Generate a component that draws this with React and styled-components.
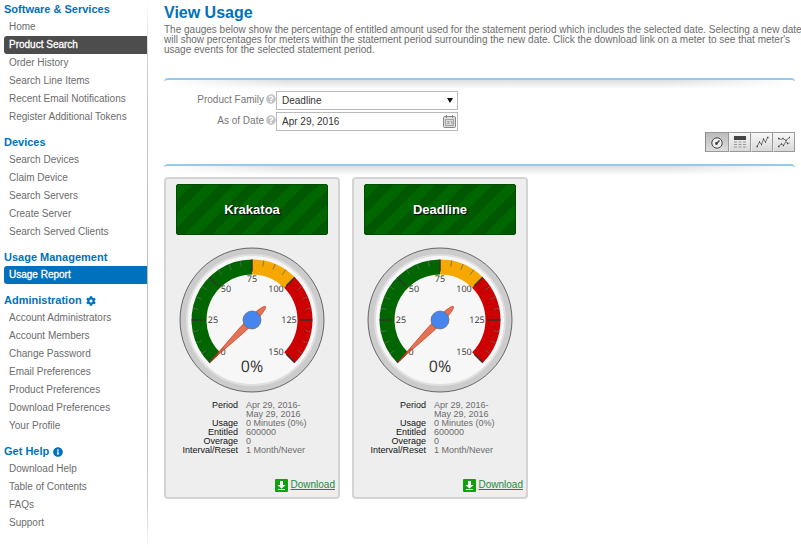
import React from "react";
import styled, { createGlobalStyle } from "styled-components";
import { FaCog, FaInfoCircle, FaQuestionCircle } from "react-icons/fa";

const GlobalStyle = createGlobalStyle`
  body {
    margin: 0;
    background: #fff;
    color: #6c6c6c;
    font-family: "Liberation Sans", Arial, sans-serif;
    font-size: 10px;
  }
`;

const Page = styled.div`
  display: flex;
  align-items: flex-start;
  overflow-x: clip;
`;

const Sidebar = styled.nav`
  flex: 0 0 144px;
  box-sizing: border-box;
  padding: 1px 0 8px;
  margin-left: 4px;
  border-right: 1px solid;
  border-image: linear-gradient(#fff, #ccc 12%, #bbb 50%, #ccc 92%, #fff) 1;
`;

const Section = styled.section`
  margin-bottom: 8px;
`;

const SectionTitle = styled.h2`
  display: flex;
  align-items: center;
  gap: 4px;
  height: 17px;
  margin: 0;
  color: #0071bc;
  font-size: 11px;
  line-height: 17px;
  white-space: nowrap;
`;

const MenuList = styled.ul`
  margin: 0;
  padding: 0;
  list-style: none;
`;

const backgrounds = { hover: "#4d4d4d", current: "#0071bc" };

const MenuLink = styled.a`
  display: block;
  padding-left: 5px;
  border-radius: 3px 0 0 3px;
  background: ${({ $state }) => backgrounds[$state] || "none"};
  color: ${({ $state }) => ($state ? "#fff" : "#6c6c6c")};
  -webkit-text-stroke: ${({ $state }) => ($state ? "0.3px #fff" : "0")};
  line-height: 18px;
  text-decoration: none;
`;

const Main = styled.main`
  flex: 1;
  min-width: 0;
  padding: 3px 6px 24px 16px;
`;

const Title = styled.h1`
  margin: 0 0 3px;
  color: #0071bc;
  font-size: 16px;
  line-height: 19px;
`;

const Description = styled.p`
  margin: 0 -8px 23px 0;
  line-height: 10px;
`;

const Divider = styled.div`
  height: 11px;
  border-top: 2px solid #96caec;
  border-radius: 4px 4px 0 0;
  background:
    linear-gradient(90deg, #fff, transparent 20% 80%, #fff),
    linear-gradient(#ddd, #fff 9px);
`;

const Filters = styled.form`
  display: grid;
  grid-template-columns: 112px 182px;
  row-gap: 2px;
`;

const Label = styled.label`
  display: flex;
  align-items: center;
  justify-content: flex-end;
  gap: 2px;
  height: 16px;
  color: #777;

  svg {
    color: #c4c4c4;
  }
`;

const Field = styled.div`
  position: relative;
`;

const control = `
  box-sizing: border-box;
  display: block;
  width: 100%;
  height: 19px;
  margin: 0;
  padding: 0 5px;
  border: 1px solid #bbb;
  border-radius: 0;
  background: #fff;
  color: #333;
  font: 10px "Liberation Sans", Arial, sans-serif;
`;

const Select = styled.select`
  ${control}
  appearance: none;
`;

const Input = styled.input`
  ${control}
`;

const Arrow = styled.span`
  position: absolute;
  top: 7px;
  right: 5px;
  border: 3px solid transparent;
  border-top: 5px solid #111;
  border-bottom: 0;
  pointer-events: none;
`;

const CalendarButton = styled.button`
  position: absolute;
  top: 3px;
  right: 2px;
  width: 13px;
  height: 13px;
  padding: 0;
  border: 0;
  background: none;

  svg {
    display: block;
  }
`;

const Toolbar = styled.div`
  display: flex;
  justify-content: flex-end;
  margin: 1px 0 12px;
`;

const ToolButton = styled.button`
  display: flex;
  align-items: center;
  justify-content: center;
  box-sizing: border-box;
  width: ${({ $active }) => ($active ? "24px" : "22px")};
  height: 20px;
  padding: 0;
  border: 1px solid #999;
  border-left-color: ${({ $active }) => ($active ? "#888" : "#eee")};
  background: ${({ $active }) =>
    $active
      ? "linear-gradient(#bbb, #ddd)"
      : "linear-gradient(#f8f8f8, #d8d8d8)"};
`;

const Cards = styled.div`
  display: flex;
  flex-wrap: wrap;
  gap: 12px;
`;

const Card = styled.article`
  box-sizing: border-box;
  width: 176px;
  padding: 5px 3px;
  border: 2px solid #d4d4d4;
  border-radius: 4px;
  background: #eee;
`;

const CardTitle = styled.h3`
  box-sizing: border-box;
  margin: 0 7px 12px;
  border: 1px solid #004d00;
  border-radius: 2px;
  background: repeating-linear-gradient(
    135deg,
    #006600 0 10px,
    #005800 10px 20px
  );
  color: #fff;
  font-size: 13px;
  line-height: 49px;
  text-align: center;
  text-shadow: 1px 1px 1px #000;
`;

const GaugeSvg = styled.svg`
  display: block;
  width: 146px;
  height: 146px;
  margin: 0 auto 8px;
  font-family: "Open Sans", sans-serif;
`;

const Details = styled.dl`
  display: grid;
  grid-template-columns: 69px 1fr;
  column-gap: 8px;
  margin: 0 0 23px;
  font-size: 9px;
  line-height: 9px;

  dt {
    color: #111;
    text-align: right;
  }

  dd {
    margin: 0;
    white-space: pre-line;
  }
`;

const Download = styled.a`
  display: flex;
  justify-content: flex-end;
  align-items: center;
  gap: 3px;
  color: #1d8a3c;
  line-height: 14px;
`;

const menu = [
  {
    title: "Software & Services",
    items: [
      "Home",
      "Product Search",
      "Order History",
      "Search Line Items",
      "Recent Email Notifications",
      "Register Additional Tokens",
    ],
  },
  {
    title: "Devices",
    items: [
      "Search Devices",
      "Claim Device",
      "Search Servers",
      "Create Server",
      "Search Served Clients",
    ],
  },
  { title: "Usage Management", items: ["Usage Report"] },
  {
    title: "Administration",
    icon: <FaCog size={10} />,
    items: [
      "Account Administrators",
      "Account Members",
      "Change Password",
      "Email Preferences",
      "Product Preferences",
      "Download Preferences",
      "Your Profile",
    ],
  },
  {
    title: "Get Help",
    icon: <FaInfoCircle size={10} />,
    items: ["Download Help", "Table of Contents", "FAQs", "Support"],
  },
];

const states = { "Product Search": "hover", "Usage Report": "current" };

const meters = ["Krakatoa", "Deadline"];

const MAX = 150;

// The dial runs from -135 to 135 degrees, with 0 degrees straight up
const toAngle = (value) => (value / MAX) * 270 - 135;

const point = (value, radius) => {
  const rad = (toAngle(value) * Math.PI) / 180;
  return [radius * Math.sin(rad), -radius * Math.cos(rad)];
};

const bandPath = (from, to) =>
  `M${point(from, 60.5)} A60.5 60.5 0 0 1 ${point(to, 60.5)} ` +
  `L${point(to, 45.5)} A45.5 45.5 0 0 0 ${point(from, 45.5)} Z`;

const bands = [
  { from: 0, to: 75, color: "#006600" },
  { from: 75, to: 100, color: "#f7a800" },
  { from: 100, to: 150, color: "#cc0000" },
];

const ticks = Array.from({ length: 25 }, (_, i) => (i * MAX) / 24);

const labels = [
  { value: 0, x: -29, y: 35 },
  { value: 25, x: -39, y: 3 },
  { value: 50, x: -26, y: -28 },
  { value: 75, x: 0, y: -38 },
  { value: 100, x: 24, y: -28 },
  { value: 125, x: 37, y: 3 },
  { value: 150, x: 24, y: 35 },
];

const Gauge = ({ value }) => {
  return (
    <GaugeSvg viewBox="-73 -73 146 146" role="img" aria-label={`${value}%`}>
      <circle r="72" fill="#ccc" stroke="#333" strokeWidth="0.7" />
      <circle r="65" fill="#f7f7f7" stroke="#e0e0e0" strokeWidth="2" />
      {bands.map((band) => (
        <path
          key={band.from}
          d={bandPath(band.from, band.to)}
          fill={band.color}
        />
      ))}
      {ticks.map((tick, i) => {
        const major = i % 4 === 0;
        const [x1, y1] = point(tick, 60.5);
        const [x2, y2] = point(tick, major ? 48.5 : 54.5);
        return (
          <line
            key={tick}
            x1={x1}
            y1={y1}
            x2={x2}
            y2={y2}
            stroke={major ? "#333" : "#666"}
            strokeWidth={major ? 1.5 : 0.8}
          />
        );
      })}
      <g
        fill="#333"
        fontSize="9"
        textAnchor="middle"
        textRendering="geometricPrecision"
      >
        {labels.map((label) => (
          <text key={label.value} x={label.x} y={label.y}>
            {label.value}
          </text>
        ))}
        <text y="52" fontSize="16">
          {value}%
        </text>
      </g>
      <path
        d="M0 -60 C1.6 -32 3.6 -16 3.4 0 C3.2 10 2 19 0 19 C-2 19 -3.2 10 -3.4 0 C-3.6 -16 -1.6 -32 0 -60Z"
        transform={`rotate(${toAngle(value)})`}
        fill="#dc3912"
        fillOpacity="0.7"
        stroke="#c63310"
        strokeWidth="0.6"
      />
      <circle r="9" fill="#4684ee" stroke="#666" strokeWidth="0.7" />
    </GaugeSvg>
  );
};

const MeterCard = ({ name }) => {
  return (
    <Card>
      <CardTitle>{name}</CardTitle>
      <Gauge value={0} />
      <Details>
        <dt>Period</dt>
        <dd>{"Apr 29, 2016-\nMay 29, 2016"}</dd>
        <dt>Usage</dt>
        <dd>0 Minutes (0%)</dd>
        <dt>Entitled</dt>
        <dd>600000</dd>
        <dt>Overage</dt>
        <dd>0</dd>
        <dt>Interval/Reset</dt>
        <dd>1 Month/Never</dd>
      </Details>
      <Download href="#download">
        <svg width="13" height="13" viewBox="0 0 13 13">
          <rect width="13" height="13" rx="1" fill="#12a012" />
          <path d="M5 2h3v4h2.5L6.5 9.5 2.5 6H5zM3 10h7v1H3z" fill="#fff" />
        </svg>
        Download
      </Download>
    </Card>
  );
};

const CalendarIcon = () => (
  <svg width="13" height="13" viewBox="0 0 13 13" fill="none" stroke="#888">
    <rect x="0.5" y="1.5" width="12" height="11" rx="1" fill="#ddd" />
    <path d="M3.5 0v3M9.5 0v3" />
    <path
      d="M2.5 4.5h8v6h-8zM4 6.5h2v2H4M7.5 6.5h1.5v3"
      strokeWidth="0.7"
    />
  </svg>
);

const views = [
  {
    name: "Gauges",
    icon: (
      <svg width="14" height="14" viewBox="0 0 14 14" fill="none" stroke="#444">
        <circle cx="7" cy="8" r="5.2" fill="#eee" />
        <circle cx="6.5" cy="8.5" r="1.4" fill="#444" stroke="none" />
        <path d="M6.5 8.5L9.5 5.5" strokeWidth="1.4" />
      </svg>
    ),
  },
  {
    name: "Table",
    icon: (
      <svg width="14" height="14" viewBox="0 0 14 14">
        <path d="M1 1h12v4H1z" fill="#444" />
        <path
          d="M1 7h12M1 9.5h12M1 12h12"
          stroke="#999"
          strokeDasharray="3 1.5"
        />
      </svg>
    ),
  },
  {
    name: "Line chart",
    icon: (
      <svg width="14" height="14" viewBox="0 0 14 14" fill="none" stroke="#777">
        <path d="M2 11.5L4.5 7l2 2.5L8.5 4l2 3L12.5 2.5" />
        <path
          d="M1.5 11.5H3M4 7h1M6 9.5h1M8 4h1M10 7h1M12 2.5h1.5"
          stroke="#444"
          strokeWidth="1.5"
        />
      </svg>
    ),
  },
  {
    name: "Comparison chart",
    icon: (
      <svg width="14" height="14" viewBox="0 0 14 14" fill="none" stroke="#777">
        <path d="M1.5 3.5L4 4.5l2-1 3 2L12.5 2.5" />
        <path d="M1.5 11.5L4.5 9l2 1.5L9 6.5l1.5 2 2-.5" />
        <path
          d="M1 3.500H2.5M5.5 3.5h1M8.5 5.5h1M12 2.5h1M1 11.5H2.5M4 9h1M6 10.5h1M10 8.5h1"
          stroke="#444"
          strokeWidth="1.5"
        />
      </svg>
    ),
  },
];

const App = () => {
  return (
    <Page>
      <GlobalStyle />
      <Sidebar>
        {menu.map(({ title, icon, items }) => (
          <Section key={title}>
            <SectionTitle>
              {title}
              {icon}
            </SectionTitle>
            <MenuList>
              {items.map((item) => (
                <li key={item}>
                  <MenuLink href="#menu" $state={states[item]}>
                    {item}
                  </MenuLink>
                </li>
              ))}
            </MenuList>
          </Section>
        ))}
      </Sidebar>
      <Main>
        <Title>View Usage</Title>
        <Description>
          The gauges below show the percentage of entitled amount used for the
          statement period which includes the selected date. Selecting a new
          date will show percentages for meters within the statement period
          surrounding the new date. Click the download link on a meter to see
          that meter's usage events for the selected statement period.
        </Description>
        <Divider />
        <Filters>
          <Label htmlFor="family">
            Product Family <FaQuestionCircle size={10} />
          </Label>
          <Field>
            <Select id="family" defaultValue="Deadline">
              <option>Deadline</option>
              <option>Krakatoa</option>
            </Select>
            <Arrow />
          </Field>
          <Label htmlFor="date">
            As of Date <FaQuestionCircle size={10} />
          </Label>
          <Field>
            <Input id="date" type="text" defaultValue="Apr 29, 2016" />
            <CalendarButton type="button" aria-label="Pick a date">
              <CalendarIcon />
            </CalendarButton>
          </Field>
        </Filters>
        <Toolbar>
          {views.map((view, i) => (
            <ToolButton
              key={view.name}
              type="button"
              aria-label={view.name}
              $active={i === 0}
            >
              {view.icon}
            </ToolButton>
          ))}
        </Toolbar>
        <Divider />
        <Cards>
          {meters.map((name) => (
            <MeterCard key={name} name={name} />
          ))}
        </Cards>
      </Main>
    </Page>
  );
};

export default App;
